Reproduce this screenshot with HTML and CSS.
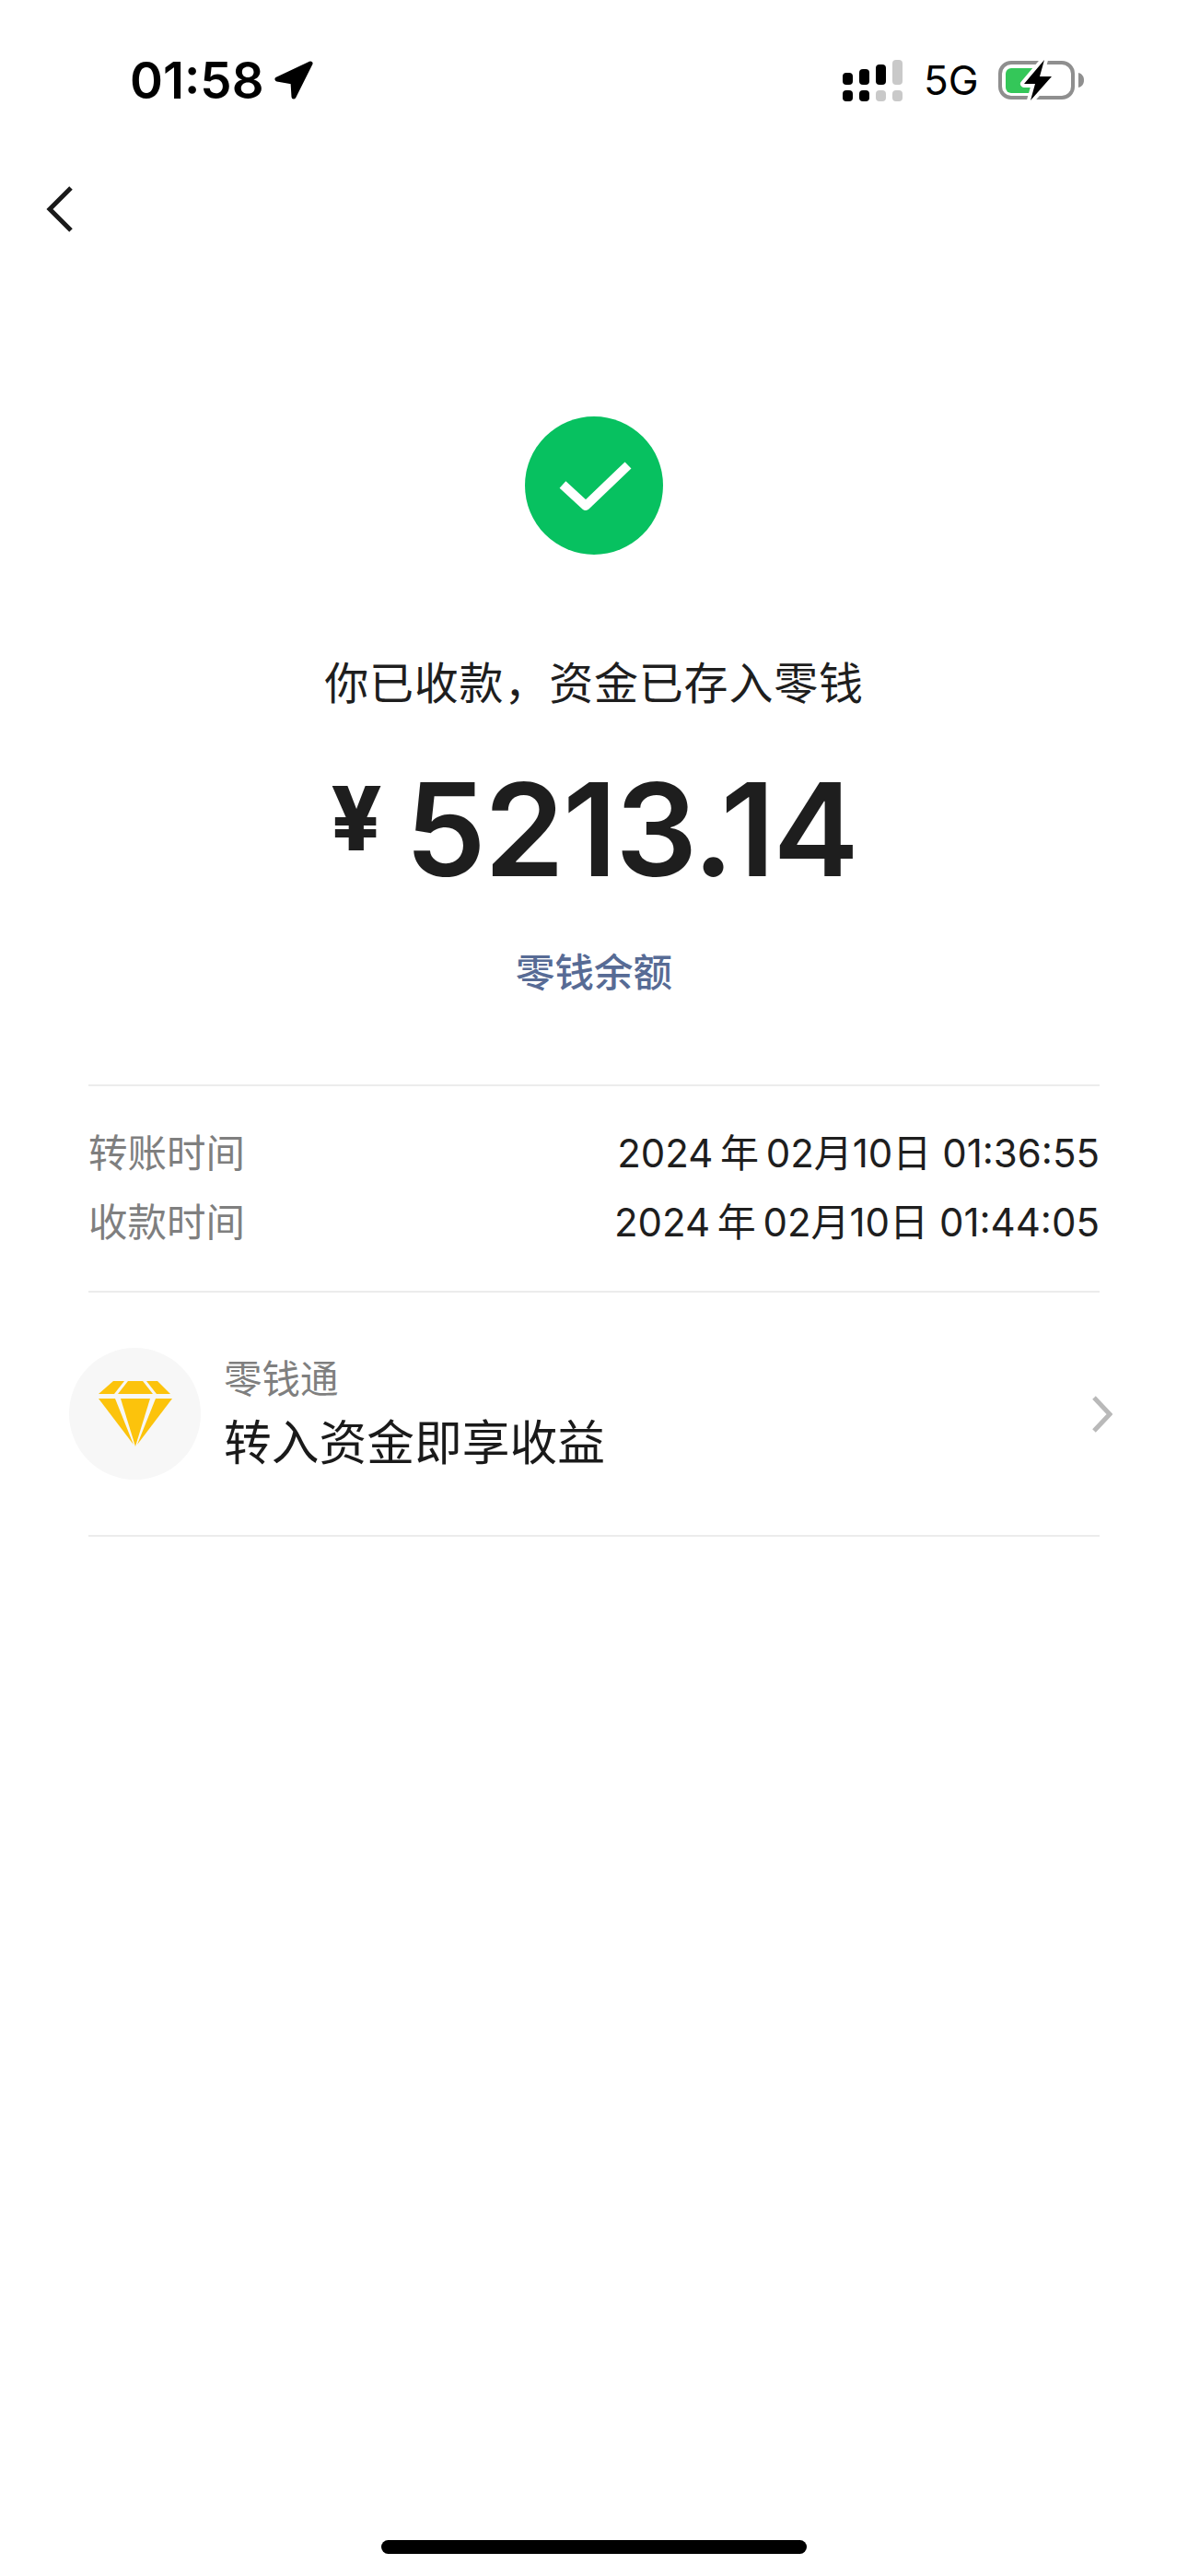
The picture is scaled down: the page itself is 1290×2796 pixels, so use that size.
FILE: index.html
```html
<!DOCTYPE html>
<html lang="zh-CN">
<head>
<meta charset="utf-8">
<title>转账详情</title>
<link rel="stylesheet" href="styles.css">
</head>
<body>
<main class="page">
  <header class="status">
    <div class="status-left">
      <span class="clock">01:58</span>
      <svg class="arrow" width="42" height="42" viewBox="0 0 42 42"><path class="ink" d="M39 3 L3 20 L20 23 L21 39 Z"/></svg>
    </div>
    <div class="status-right">
      <svg class="signal" width="65" height="45" viewBox="0 0 65 45">
        <rect class="ink" x="0" y="14" width="11" height="13" rx="4"/>
        <rect class="ink" x="18" y="10" width="11" height="17" rx="4"/>
        <rect class="ink" x="36" y="5" width="11" height="22" rx="4"/>
        <rect class="dim" x="54" y="0" width="11" height="27" rx="4"/>
        <rect class="ink" x="0" y="33" width="11" height="12" rx="4"/>
        <rect class="ink" x="18" y="33" width="11" height="12" rx="4"/>
        <rect class="dim" x="36" y="33" width="11" height="12" rx="4"/>
        <rect class="dim" x="54" y="33" width="11" height="12" rx="4"/>
      </svg>
      <span class="net">5G</span>
      <svg class="battery" width="93" height="46" viewBox="0 0 93 46">
        <rect class="batt-shell" x="2" y="4" width="79" height="38" rx="12"/>
        <path class="batt-cap" d="M87 15 C91 16 93 19 93 23 C93 27 91 30 87 31 Z"/>
        <rect class="batt-fill" x="8" y="10" width="38" height="27" rx="6"/>
        <path class="bolt-halo" d="M50 1 L28 27 H40 L35 45 L58 19 H45 Z"/>
        <path class="ink" d="M50 1 L28 27 H40 L35 45 L58 19 H45 Z"/>
      </svg>
    </div>
  </header>

  <nav class="nav">
    <svg width="30" height="52" viewBox="0 0 30 52"><path class="back" d="M27 3 L4 26 L27 49"/></svg>
  </nav>

  <section class="hero">
    <div class="check-badge">
      <svg width="150" height="150" viewBox="0 0 150 150"><path class="check" d="M41 74 L66 97 L112 53"/></svg>
    </div>
    <p class="title">你已收款，资金已存入零钱</p>
    <div class="amount"><span class="yen">¥</span><span class="sum">5213.14</span></div>
    <p class="balance">零钱余额</p>
  </section>

  <section class="details">
    <div class="row"><span class="row-label">转账时间</span><span class="row-value">2024&thinsp;年&thinsp;02月10日 01:36:55</span></div>
    <div class="row"><span class="row-label">收款时间</span><span class="row-value">2024&thinsp;年&thinsp;02月10日 01:44:05</span></div>
  </section>

  <section class="promo">
    <div class="gem">
      <svg width="80" height="71" viewBox="0 0 80 71">
        <path class="gold" d="M16 0 H28 L17 14 H0 Z"/>
        <path class="gold" d="M32 0 H48 L59 14 H21 Z"/>
        <path class="gold" d="M52 0 H64 L78 14 H63 Z"/>
        <path class="gold" d="M0 19 H18 L38 69 Z"/>
        <path class="gold" d="M24 19 H56 L40 71 Z"/>
        <path class="gold" d="M62 19 H80 L42 69 Z"/>
      </svg>
    </div>
    <div class="promo-text">
      <span class="promo-name">零钱通</span>
      <span class="promo-line">转入资金即享收益</span>
    </div>
    <svg class="more" width="22" height="40" viewBox="0 0 22 40"><path class="more-path" d="M2 2 L19 20 L2 38"/></svg>
  </section>

  <div class="home-bar"></div>
</main>
</body>
</html>
```

FILE: styles.css
```css
* { box-sizing: border-box; }
html, body { margin: 0; padding: 0; background: #fff; }
.page {
  width: 1290px;
  height: 2796px;
  display: flex;
  flex-direction: column;
  background: #fff;
  color: #1e1e1e;
  font-family: "Inter", "Noto Sans CJK SC", sans-serif;
}
p { margin: 0; }
.ink { fill: #000; }
.dim { fill: #c9c9c9; }

.status {
  height: 174px;
  padding: 0 113px 0 141px;
  display: flex;
  justify-content: space-between;
  align-items: center;
}
.status-left { display: flex; align-items: center; gap: 11px; }
.clock { font-size: 54.5px; font-weight: 600; color: #000; line-height: 60px; }
.arrow { display: block; }
.arrow .ink { stroke: #000; stroke-width: 5; stroke-linejoin: round; }
.status-right { display: flex; align-items: center; gap: 23px; }
.signal, .battery { display: block; }
.net { font-size: 44px; font-weight: 400; color: #000; line-height: 46px; width: 58px; }
.batt-shell { fill: none; stroke: #8f8f8f; stroke-width: 4; }
.batt-cap { fill: #8f8f8f; }
.batt-fill { fill: #34c759; }
.bolt-halo { fill: #fff; stroke: #fff; stroke-width: 8; stroke-linejoin: round; }

.nav { height: 106px; padding-left: 50px; display: flex; align-items: center; }
.back { fill: none; stroke: #1a1a1a; stroke-width: 5; }

.hero { display: flex; flex-direction: column; align-items: center; padding-top: 172px; }
.check-badge { width: 150px; height: 150px; border-radius: 50%; background: #07c160; }
.check-badge svg { display: block; }
.check { fill: none; stroke: #fff; stroke-width: 10; stroke-linejoin: round; }
.title { margin-top: 110px; font-size: 48px; line-height: 60px; letter-spacing: 0.8px; color: #1e1e1e; }
.amount { margin-top: 48px; height: 160px; display: flex; align-items: center; gap: 25px; }
.yen { font-size: 96px; font-weight: 800; line-height: 160px; position: relative; top: -12px; }
.sum { font-size: 140px; font-weight: 600; line-height: 160px; letter-spacing: -2px; color: #1e1e1e; }
.balance { margin-top: 46px; font-size: 42.5px; line-height: 60px; font-weight: 500; color: #576b95; }

.details {
  margin: 91px 96px 0;
  padding: 32px 0 40px;
  border-top: 2px solid #ececec;
  border-bottom: 2px solid #ececec;
}
.row { height: 75px; display: flex; justify-content: space-between; align-items: center; }
.row-label { font-size: 42.5px; color: #7f7f7f; }
.row-value { font-size: 42px; color: #1e1e1e; }

.promo {
  margin: 0 96px;
  height: 265px;
  border-bottom: 2px solid #ececec;
  display: flex;
  align-items: center;
  position: relative;
}
.gem {
  width: 143px;
  height: 143px;
  margin-left: -21px;
  border-radius: 50%;
  background: #f7f7f7;
  display: flex;
  align-items: center;
  justify-content: center;
  flex: none;
}
.gem svg { display: block; }
.gold { fill: #fcc30c; }
.promo-text { margin-left: 25px; display: flex; flex-direction: column; flex: 1; gap: 8px; }
.promo-name { font-size: 41.5px; line-height: 54px; color: #7f7f7f; }
.promo-line { font-size: 51.75px; line-height: 68px; color: #1a1a1a; }
.more { display: block; margin-right: -14px; }
.more-path { fill: none; stroke: #b9b9b9; stroke-width: 5; }

.home-bar {
  width: 462px;
  height: 15px;
  margin: auto auto 24px;
  border-radius: 8px;
  background: #000;
}
```
